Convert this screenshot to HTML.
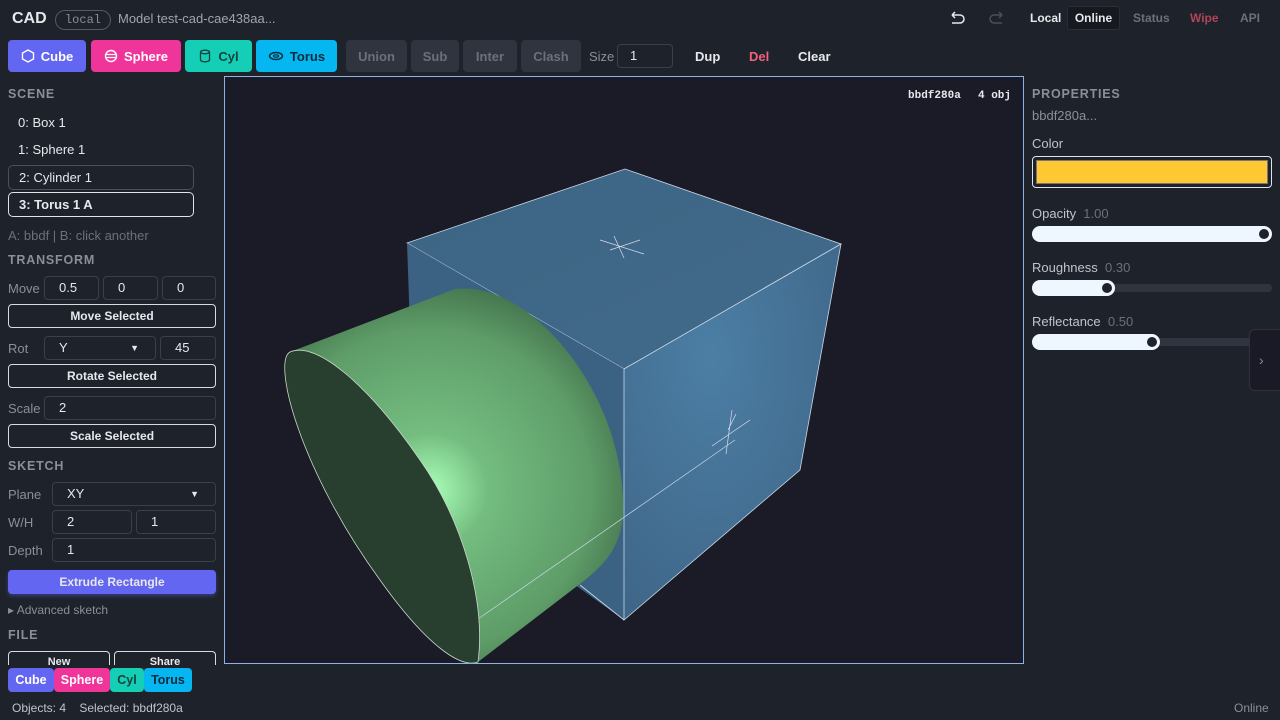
<!DOCTYPE html>
<html><head><style>
*{box-sizing:border-box;margin:0;padding:0}
body{width:1280px;height:720px;background:#1e222a;font-family:"Liberation Sans",sans-serif;color:#e6e8ec;position:relative;overflow:hidden;font-size:13px}
.abs{position:absolute}
.btn{position:absolute;top:40px;height:32px;border-radius:4px;font-weight:bold;font-size:13px;display:flex;align-items:center;justify-content:center;gap:6px}
.gray{background:#2f343e;color:#6b707a}
.lbl{position:absolute;color:#8a8f98;font-size:13px}
.inp{position:absolute;height:24px;border:1px solid #3a3f49;border-radius:4px;padding-left:14px;line-height:22px;font-size:13px;color:#e6e8ec}
.obtn{position:absolute;left:8px;width:208px;height:24px;border:1px solid #d8dbe0;border-radius:4px;font-weight:bold;font-size:12px;text-align:center;line-height:22px}
.sec{position:absolute;left:8px;font-weight:bold;font-size:12.5px;color:#8a8f98;letter-spacing:0.8px}
.item{position:absolute;left:8px;width:186px;height:25px;padding-left:10px;line-height:24px;font-size:13px;border-radius:5px}
.chip{position:absolute;top:668px;height:24px;border-radius:4px;font-weight:bold;font-size:12.5px;text-align:center;line-height:24px}
.track{position:absolute;left:1032px;width:240px;height:8px;background:#2f343e;border-radius:4px}
.fill{position:absolute;left:0;top:-4px;height:16px;background:#eef7ff;border-radius:8px}
.knob{position:absolute;top:-1px;width:10px;height:10px;background:#1e222a;border-radius:50%}
</style></head><body>
<div class="abs" style="left:12px;top:10px;font-weight:bold;font-size:16px">CAD</div>
<div class="abs" style="left:55px;top:10px;width:56px;height:20px;border:1px solid #555a63;border-radius:10px;font-family:'Liberation Mono',monospace;font-size:12px;color:#8a8f98;text-align:center;line-height:18px">local</div>
<div class="abs" style="left:118px;top:11px;color:#a0a5ad;font-size:13px">Model test-cad-cae438aa...</div>
<svg class="abs" style="left:948px;top:10px" width="60" height="18" viewBox="0 0 60 18"><path d="M4 5h8a4 4 0 0 1 0 8H4M4 5l3-3M4 5l3 3" fill="none" stroke="#e6e8ec" stroke-width="1.5"/><path d="M54 5h-8a4 4 0 0 0 0 8h8M54 5l-3-3M54 5l-3 3" fill="none" stroke="#4a4f58" stroke-width="1.5"/></svg>
<div class="abs" style="left:1030px;top:11px;font-weight:bold;font-size:12px">Local</div>
<div class="abs" style="left:1067px;top:6px;width:53px;height:24px;background:#161a20;border:1px solid #2a2e36;border-radius:3px;font-weight:bold;font-size:12px;text-align:center;line-height:22px">Online</div>
<div class="abs" style="left:1133px;top:11px;font-weight:bold;font-size:12px;color:#6b707a">Status</div>
<div class="abs" style="left:1190px;top:11px;font-weight:bold;font-size:12px;color:#b0455a">Wipe</div>
<div class="abs" style="left:1240px;top:11px;font-weight:bold;font-size:12px;color:#6b707a">API</div>

<div class="btn" style="left:8px;width:78px;background:#6366f1;color:#fff"><svg width="14" height="14"><path d="M7 1l5.5 3v6L7 13l-5.5-3V4z" fill="none" stroke="#fff" stroke-width="1.4"/></svg>Cube</div>
<div class="btn" style="left:91px;width:90px;background:#f0359a;color:#fff"><svg width="14" height="14"><circle cx="7" cy="7" r="5.5" fill="none" stroke="#fff" stroke-width="1.4"/><path d="M1.5 5.5h11M1.5 8.5h11" stroke="#fff" stroke-width="1.2"/></svg>Sphere</div>
<div class="btn" style="left:185px;width:67px;background:#14cfb6;color:#15413b"><svg width="14" height="14"><ellipse cx="7" cy="3" rx="4.5" ry="1.8" fill="none" stroke="#15413b" stroke-width="1.3"/><path d="M2.5 3v8a4.5 1.8 0 0 0 9 0V3" fill="none" stroke="#15413b" stroke-width="1.3"/></svg>Cyl</div>
<div class="btn" style="left:256px;width:81px;background:#06b6f0;color:#0b2a3a"><svg width="16" height="12"><ellipse cx="8" cy="6" rx="6.5" ry="3.5" fill="none" stroke="#0b2a3a" stroke-width="1.4"/><ellipse cx="8" cy="6" rx="2.5" ry="1.2" fill="none" stroke="#0b2a3a" stroke-width="1.2"/></svg>Torus</div>
<div class="btn gray" style="left:346px;width:61px">Union</div>
<div class="btn gray" style="left:411px;width:48px">Sub</div>
<div class="btn gray" style="left:463px;width:54px">Inter</div>
<div class="btn gray" style="left:521px;width:60px">Clash</div>
<div class="abs" style="left:589px;top:49px;color:#8a8f98;font-size:13px">Size</div>
<div class="inp" style="left:617px;top:44px;width:56px;height:24px;padding-left:12px">1</div>
<div class="abs" style="left:695px;top:49px;font-weight:bold;font-size:13px">Dup</div>
<div class="abs" style="left:749px;top:49px;font-weight:bold;font-size:13px;color:#f0637a">Del</div>
<div class="abs" style="left:798px;top:49px;font-weight:bold;font-size:13px">Clear</div>

<div class="sec" style="top:87px">SCENE</div>
<div class="item" style="top:111px">0: Box 1</div>
<div class="item" style="top:138px">1: Sphere 1</div>
<div class="item" style="top:165px;border:1px solid #4a4f58">2: Cylinder 1</div>
<div class="item" style="top:192px;border:1.5px solid #e0e3e8;font-weight:bold">3: Torus 1 A</div>
<div class="lbl" style="left:8px;top:228px;color:#6b707a">A: bbdf | B: click another</div>
<div class="sec" style="top:253px">TRANSFORM</div>
<div class="lbl" style="left:8px;top:281px">Move</div>
<div class="inp" style="left:44px;top:276px;width:55px">0.5</div>
<div class="inp" style="left:103px;top:276px;width:55px">0</div>
<div class="inp" style="left:162px;top:276px;width:54px">0</div>
<div class="obtn" style="top:304px">Move Selected</div>
<div class="lbl" style="left:8px;top:341px">Rot</div>
<div class="inp" style="left:44px;top:336px;width:112px">Y<span style="position:absolute;right:16px;top:0;font-size:9px">▼</span></div>
<div class="inp" style="left:160px;top:336px;width:56px">45</div>
<div class="obtn" style="top:364px">Rotate Selected</div>
<div class="lbl" style="left:8px;top:401px">Scale</div>
<div class="inp" style="left:44px;top:396px;width:172px">2</div>
<div class="obtn" style="top:424px">Scale Selected</div>
<div class="sec" style="top:459px">SKETCH</div>
<div class="lbl" style="left:8px;top:487px">Plane</div>
<div class="inp" style="left:52px;top:482px;width:164px">XY<span style="position:absolute;right:16px;top:0;font-size:9px">▼</span></div>
<div class="lbl" style="left:8px;top:515px">W/H</div>
<div class="inp" style="left:52px;top:510px;width:80px">2</div>
<div class="inp" style="left:136px;top:510px;width:80px">1</div>
<div class="lbl" style="left:8px;top:543px">Depth</div>
<div class="inp" style="left:52px;top:538px;width:164px">1</div>
<div class="abs" style="left:8px;top:570px;width:208px;height:24px;background:#6366f1;border-radius:4px;font-weight:bold;font-size:12px;text-align:center;line-height:24px;box-shadow:0 2px 4px rgba(99,102,241,.4)">Extrude Rectangle</div>
<div class="lbl" style="left:8px;top:603px;font-size:12px">▸ Advanced sketch</div>
<div class="sec" style="top:628px">FILE</div>
<div class="abs" style="left:8px;top:651px;width:102px;height:14px;border:1px solid #d8dbe0;border-bottom:none;border-radius:4px 4px 0 0;font-weight:bold;font-size:11px;text-align:center;overflow:hidden;line-height:20px">New</div>
<div class="abs" style="left:114px;top:651px;width:102px;height:14px;border:1px solid #d8dbe0;border-bottom:none;border-radius:4px 4px 0 0;font-weight:bold;font-size:11px;text-align:center;overflow:hidden;line-height:20px">Share</div>
<div class="chip" style="left:8px;width:46px;background:#6366f1;color:#fff">Cube</div>
<div class="chip" style="left:54px;width:56px;background:#f0359a;color:#fff">Sphere</div>
<div class="chip" style="left:110px;width:34px;background:#14cfb6;color:#15413b">Cyl</div>
<div class="chip" style="left:144px;width:48px;background:#06b6f0;color:#0b2a3a">Torus</div>
<div class="abs" style="left:12px;top:701px;font-size:12px;color:#c0c4ca">Objects: 4 &nbsp;&nbsp; Selected: bbdf280a</div>
<div class="abs" style="left:1234px;top:701px;font-size:12px;color:#8a8f98">Online</div>

<div class="abs" style="left:224px;top:76px;width:800px;height:588px;background:#1a1b26;border:1px solid #8ab4e8;overflow:hidden">
<svg width="800" height="588" viewBox="224 76 800 588" style="position:absolute;left:-1px;top:-1px">
<defs>
<linearGradient id="ct" x1="0" y1="0" x2="1" y2="1"><stop offset="0" stop-color="#3c6584"/><stop offset="1" stop-color="#42698a"/></linearGradient>
<radialGradient id="cr" cx="0.4" cy="0.3" r="0.8"><stop offset="0" stop-color="#4c7ea4"/><stop offset="1" stop-color="#3e6587"/></radialGradient>
<radialGradient id="cyl" cx="430" cy="490" r="230" gradientUnits="userSpaceOnUse"><stop offset="0" stop-color="#aaffb8"/><stop offset="0.25" stop-color="#74bd80"/><stop offset="0.7" stop-color="#5e9c68"/><stop offset="1" stop-color="#3a6444"/></radialGradient>
</defs>
<path d="M407 243L625 169L841 244L624 369Z" fill="url(#ct)" stroke="#c8d8e8" stroke-width="0.8"/>
<path d="M407 243L624 369L624 620L415 470Z" fill="#3b6282"/>
<path d="M624 369L841 244L800 470L624 620Z" fill="url(#cr)" stroke="#c8d8e8" stroke-width="0.8"/>
<path d="M580 585L624 620" stroke="#c8d8e8" stroke-width="0.8"/>
<path d="M600 240l44 14M614 236l10 22M610 250l30 -10" stroke="#dde" stroke-width="0.7"/>
<path d="M712 446l38 -26M732 410l-6 44M728 430l8 -16" stroke="#dde" stroke-width="0.7"/>
<path d="M290 352L455 289C530 280 620 390 623 500C625 540 610 560 585 580L478 662Z" fill="url(#cyl)"/>
<path d="M478 619L735 440" stroke="#c8d8e8" stroke-width="0.7"/>
<path d="M290 352C272 362 300 470 380 580C430 650 462 668 478 662C486 600 462 520 420 460C372 390 318 340 290 352Z" fill="#283e2e" stroke="#c8d8c8" stroke-width="0.8"/>
<text x="908" y="98" font-family="Liberation Mono,monospace" font-size="11" font-weight="bold" fill="#e6e8ec">bbdf280a</text>
<text x="978" y="98" font-family="Liberation Mono,monospace" font-size="11" font-weight="bold" fill="#e6e8ec">4 obj</text>
</svg></div>

<div class="sec" style="left:1032px;top:87px">PROPERTIES</div>
<div class="lbl" style="left:1032px;top:108px">bbdf280a...</div>
<div class="lbl" style="left:1032px;top:136px;color:#c0c4ca">Color</div>
<div class="abs" style="left:1032px;top:156px;width:240px;height:32px;border:1px solid #e0e3e8;border-radius:4px;padding:3px"><div style="width:100%;height:100%;background:#fec832;border:1px solid #777"></div></div>
<div class="lbl" style="left:1032px;top:206px;color:#c0c4ca">Opacity <span style="color:#6b707a">&nbsp;1.00</span></div>
<div class="track" style="top:230px"><div class="fill" style="width:240px"></div><div class="knob" style="left:227px"></div></div>
<div class="lbl" style="left:1032px;top:260px;color:#c0c4ca">Roughness <span style="color:#6b707a">&nbsp;0.30</span></div>
<div class="track" style="top:284px"><div class="fill" style="width:83px"></div><div class="knob" style="left:70px"></div></div>
<div class="lbl" style="left:1032px;top:314px;color:#c0c4ca">Reflectance <span style="color:#6b707a">&nbsp;0.50</span></div>
<div class="track" style="top:338px"><div class="fill" style="width:128px"></div><div class="knob" style="left:115px"></div></div>
<div class="abs" style="left:1249px;top:329px;width:40px;height:62px;background:#191a26;border:1px solid #2e323c;border-radius:6px;color:#8a8f98;font-size:14px;line-height:60px;padding-left:9px">›</div>
</body></html>
